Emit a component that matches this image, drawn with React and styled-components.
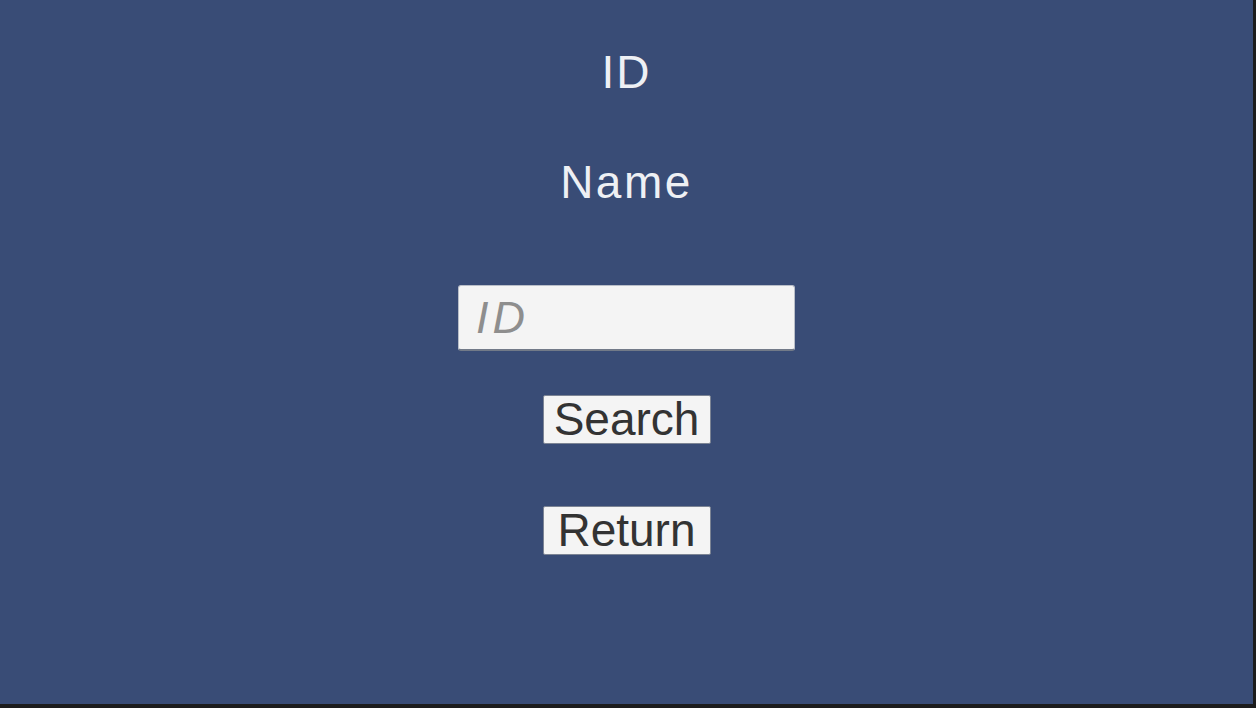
import React from "react";
import styled, { createGlobalStyle } from "styled-components";

const GlobalStyle = createGlobalStyle`
  html, body {
    margin: 0;
    padding: 0;
    background: #1c1c1c;
    overflow: hidden;
  }
`;

const Screen = styled.div`
  width: 1253px;
  height: 704px;
  background: #394c76;
  display: flex;
  flex-direction: column;
  align-items: center;
  padding-top: 49px;
  box-sizing: border-box;
  font-family: "Liberation Sans", Arial, sans-serif;
`;

const Label = styled.div`
  height: 46px;
  line-height: 46px;
  font-size: 46px;
  color: #eef0f4;
  letter-spacing: ${(p) => p.$spacing || "0"};
  margin-bottom: ${(p) => p.$gap};
`;

const Field = styled.input`
  width: 337px;
  height: 66px;
  box-sizing: border-box;
  background: #f4f4f4;
  border: 1px solid #b9bec8;
  border-bottom: 2px solid #727a88;
  border-radius: 3px;
  padding: 0 0 0 17px;
  font-family: "Liberation Sans", Arial, sans-serif;
  font-size: 45px;
  letter-spacing: 4px;
  color: #323232;
  outline: none;
  margin-bottom: 44px;

  &::placeholder {
    color: #8e8e8e;
    font-style: italic;
  }
`;

const Button = styled.button`
  width: 168px;
  height: 49px;
  box-sizing: border-box;
  background: #f4f4f4;
  border: 1px solid #7c8494;
  border-radius: 2px;
  padding: 0;
  font-family: "Liberation Sans", Arial, sans-serif;
  font-size: 46px;
  line-height: 47px;
  color: #333333;
  cursor: pointer;
  margin-bottom: ${(p) => p.$gap || "0"};
`;

export default function App() {
  return (
    <>
      <GlobalStyle />
      <Screen>
        <Label $gap="64px" $spacing="2px">ID</Label>
        <Label $gap="80px" $spacing="2.5px">Name</Label>
        <Field placeholder="ID" />
        <Button $gap="62px">Search</Button>
        <Button>Return</Button>
      </Screen>
    </>
  );
}
